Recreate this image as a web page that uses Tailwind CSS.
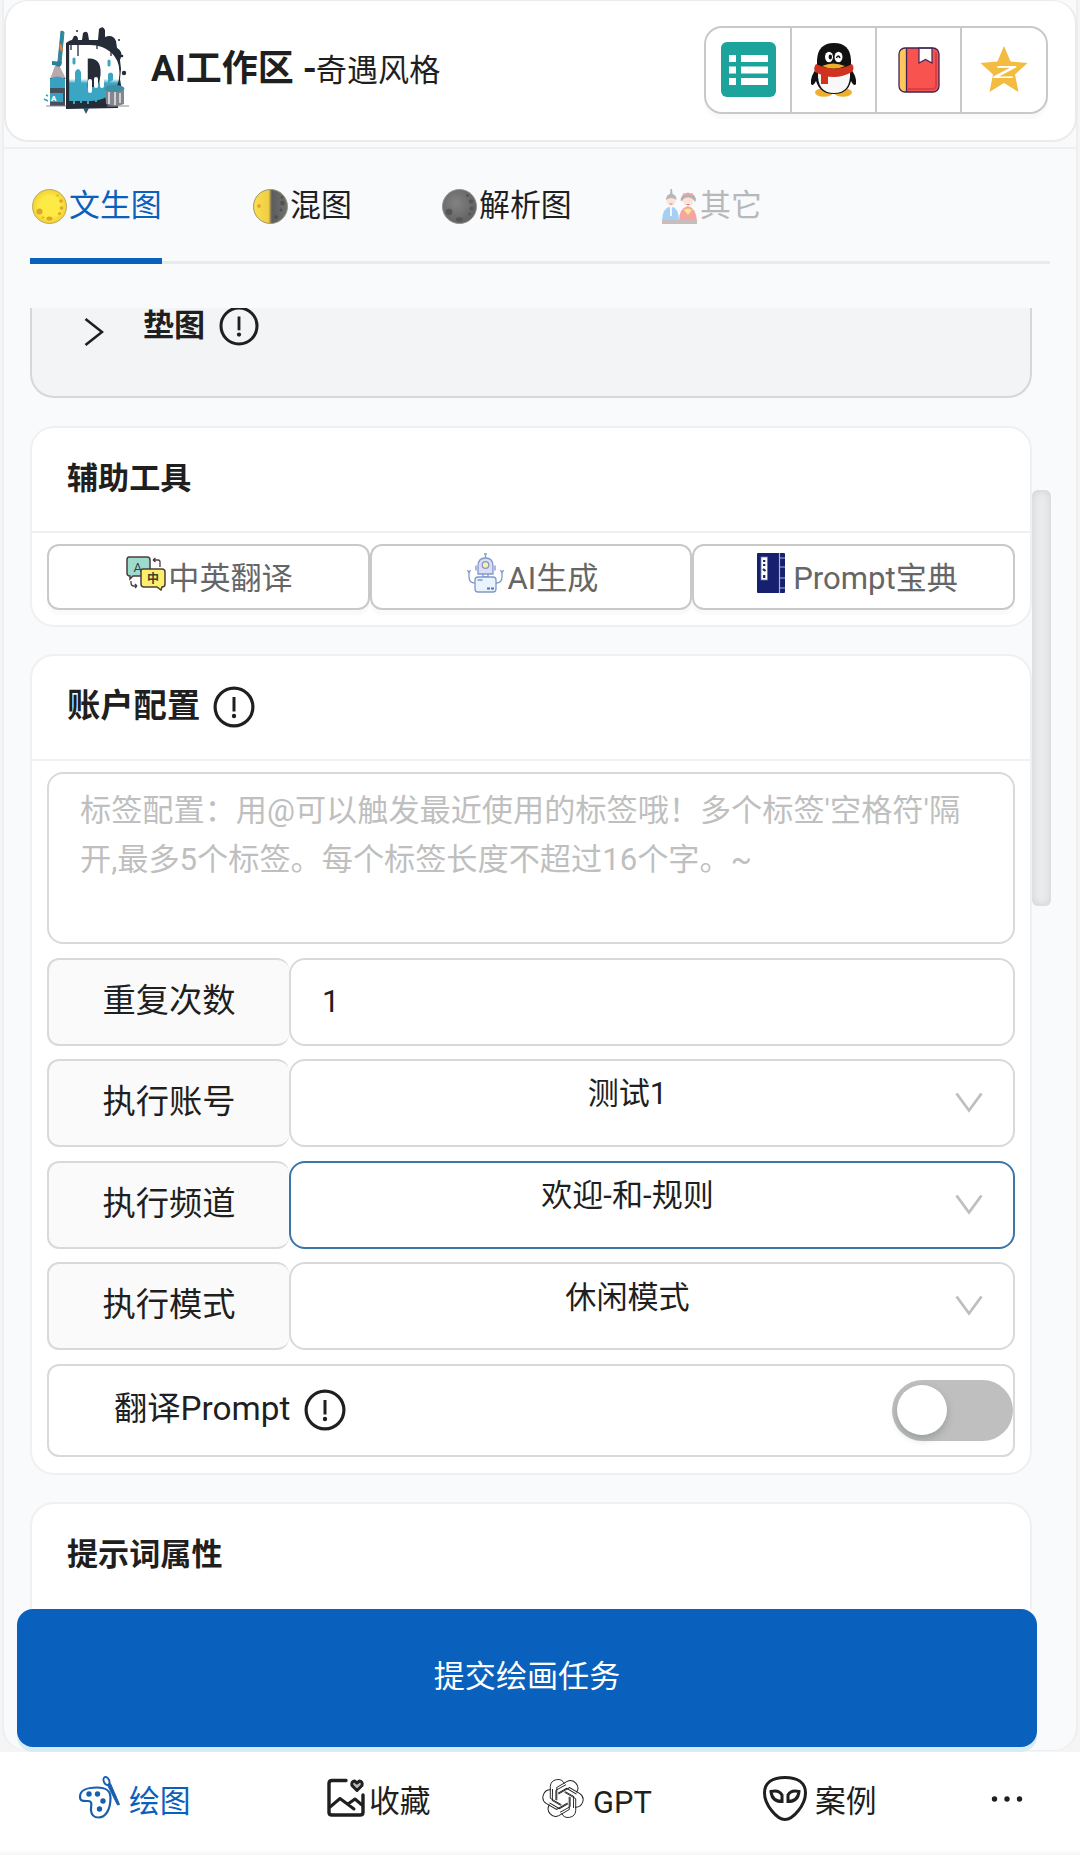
<!DOCTYPE html>
<html lang="zh-CN">
<head>
<meta charset="utf-8">
<title>AI工作区</title>
<script src="https://cdn.jsdelivr.net/npm/@tailwindcss/browser@4"></script>
</head>
<body class="w-[1080px] h-[1855px] overflow-hidden bg-[#f5f5f5] text-[#1f1f1f] font-['Roboto','Noto_Sans_CJK_SC',sans-serif] text-[31.1px] leading-[48px] flex flex-col">

<svg class="hidden">
  <symbol id="info" viewBox="0 0 42 42">
    <circle cx="21" cy="21" r="18.9" fill="none" stroke="#1f1f1f" stroke-width="3.2"/>
    <path d="M21 11v14.5" stroke="#1f1f1f" stroke-width="3"/>
    <circle cx="21" cy="30" r="2.2" fill="#1f1f1f"/>
  </symbol>
  <symbol id="down" viewBox="0 0 28 20">
    <path d="M1.5 .5 14 17.5 26.500 .5" fill="none" stroke="#bfbfbf" stroke-width="2.800"/>
  </symbol>
</svg>

<main class="h-[1751px] mx-[2px] rounded-b-[24px] border-x-2 border-b border-[#eeeff0] bg-[#f9fafc] flex flex-col">

  <header class="h-[142px] shrink-0 -mr-px rounded-[24px] border-2 border-t border-[#ebebeb] bg-white flex items-center pl-[37px] pr-[27px]">
    <svg class="w-[88px] h-[90px] shrink-0" viewBox="42 27 88 90">
      <path d="M65 44q4-3 6-3l2-4q4-1 4 4h4l1-7q4-3 5 1l1 6h9l1-11q4-4 6 1v7q8-3 11 4l1 7q7 4 3 12l1 9-1 10 2 12-4 12v5l-52 1z" fill="#262b38"/>
      <defs><linearGradient id="dfill" x1="0" y1="45" x2="0" y2="101" gradientUnits="userSpaceOnUse"><stop offset=".62" stop-color="#fff"/><stop offset=".7" stop-color="#3ba6c4"/><stop offset="1" stop-color="#3ba6c4"/></linearGradient></defs>
      <text x="66" y="100" font-family="Roboto" font-weight="900" font-size="73" textLength="53" lengthAdjust="spacingAndGlyphs" fill="url(#dfill)" stroke="url(#dfill)" stroke-width="4">D</text>
      <path d="M74 84v-11q3-6 6 0v14M107 84v-9q3-3 5 0v6" fill="#3ba6c4"/>
      <path d="M89 82v10M95 80v7M101 79v8" stroke="#fff" stroke-width="4" stroke-linecap="round"/>
      <path d="M70 45v6M77 45v12M96 45v5M110 50v7" stroke="#262b38" stroke-width="1.300"/>
      <path d="M73 60v4M108 62v4" stroke="#3ba6c4" stroke-width="3" stroke-linecap="round"/>
      <circle cx="123" cy="74" r="2.200" fill="#262b38"/><circle cx="121" cy="57" r="1.300" fill="#262b38"/><circle cx="118" cy="41" r="1" fill="#262b38"/><circle cx="76" cy="32" r="1" fill="#262b38"/>
      <path d="M60 32l3 1-3 31-4 9-3-1 4-10z" fill="#31859c" stroke="#31859c"/>
      <path d="M59 45l2 7" stroke="#e0803b" stroke-width="2.500"/>
      <path d="M51 62l10 1-1 4-9-1z" fill="#2d7e96"/>
      <path d="M54 67l5 1 6 12H49z" fill="#b7a9ac"/>
      <path d="M49 79h15v28H49z" fill="#474f5d"/>
      <path d="M49 80q7-5 15 0v9H49zM49 94h13v9H49z" fill="#36a1c0"/>
      <text x="50" y="102" font-family="Roboto" font-weight="900" font-size="8" fill="#fff">A</text>
      <path d="M45 107h20M106 107h22" stroke="#8a8d94" stroke-width="1"/>
      <path d="M104 90h19v15q-9 4-18 0z" fill="#85868d"/><path d="M108 93v12M114 93v13M119 94v10" stroke="#cfd1d5" stroke-width="2"/>
      <ellipse cx="113.500" cy="89.500" rx="10" ry="3.500" fill="#3e8fa5"/>
      <path d="M73 100v5M80 100v4M87 100v5M95 99v4" stroke="#3ba6c4" stroke-width="2"/>
      <path d="M82 109h6l-3 6z" fill="#33566b"/>
      <path d="M43 100l4 2M45 96l2 1" stroke="#36a1c0" stroke-width="1.500"/>
    </svg>
    <h1 class="ml-[20px] -mt-[1px] whitespace-nowrap"><span class="text-[36px] font-bold">AI工作区 -</span><span class="-ml-px">奇遇风格</span></h1>

    <nav class="ml-auto -mt-[2px] h-[88px] flex rounded-[18px] border-2 border-[#c9c9c9] bg-white shadow-[0_5px_0_rgba(0,0,0,0.02)] divide-x-2 divide-[#c9c9c9]">
      <a class="w-[86px] flex items-center justify-center"><svg class="w-[55px] h-[55px]" viewBox="0 0 55 55"><rect width="55" height="55" rx="6" fill="#1ba39c"/><path d="M8 13h7v7H8zM8 24.500h7v7H8zM8 36h7v7H8zM20 13h27v7H20zM20 24.500h27v7H20zM20 36h27v7H20z" fill="#fff"/></svg></a>
      <a class="w-[85px] flex items-center justify-center"><svg class="w-[48px] h-[56px]" viewBox="0 0 48 56">
        <ellipse cx="14" cy="50.500" rx="9" ry="4.200" fill="#eeb02c"/><ellipse cx="33" cy="50.500" rx="9" ry="4.200" fill="#eeb02c"/>
        <path d="M7 26Q0 34 1 42q2 3 5-3 4 13 18 13t17-13q3 6 5 3 1-8-6-16z" fill="#111"/>
        <path d="M7 27V18Q8 1 24 1t17 17v9q-4 6-17 6T7 27z" fill="#111"/>
        <path d="M8 30Q7 51 24 51t16-21q-16 7-32 0z" fill="#f8f8f8"/>
        <path d="M6 22q-3 4-1 8 19 10 37 0 3-4 0-8-17 9-36 0z" fill="#d0321f"/><path d="M11 31l7 2v9h-7z" fill="#d0321f"/>
        <ellipse cx="19" cy="15" rx="4" ry="5.200" fill="#fff"/><ellipse cx="28.500" cy="15" rx="4" ry="5.200" fill="#fff"/><ellipse cx="20.300" cy="15" rx="1.700" ry="2.400" fill="#111"/><path d="M26.500 16q1.500-4 3.500 0" fill="none" stroke="#111" stroke-width="1.600"/>
        <path d="M12 24q11-5 23 0-11 5-23 0z" fill="#eeb02c"/></svg></a>
      <a class="w-[85px] flex items-center justify-center"><svg class="w-[42px] h-[46px]" viewBox="0 0 42 46"><rect x="1" y="1" width="40" height="44" rx="6" fill="#f9534f"/><path d="M8.500 1H7a6 6 0 0 0-6 6v32a6 6 0 0 0 6 6h1.500z" fill="#ffc65c"/><path d="M38 5v33q0 4-4 4H10" fill="none" stroke="#d93f45" stroke-width="2"/><path d="M21 1v15l6.500-3.500L34 16V1z" fill="#fff" stroke="#412552" stroke-width="1.200"/><path d="M8.500 1v44" stroke="#412552" stroke-width="1.300"/><rect x="1" y="1" width="40" height="44" rx="6" fill="none" stroke="#412552" stroke-width="1.300"/></svg></a>
      <a class="w-[84px] flex items-center justify-center"><svg class="w-[48px] h-[47px]" viewBox="0 0 48 47"><path d="M24 0l6.500 15.500L47.500 17 35 28.500 38.500 46 24 37 9.500 46 13 28.500.5 17l17-1.500z" fill="#f3bb3f"/><text x="13.500" y="32" font-family="Roboto" font-style="italic" font-weight="500" font-size="17" textLength="22" lengthAdjust="spacingAndGlyphs" fill="#fff">Z</text></svg></a>
    </nav>
  </header>

  <div class="mt-[5px] h-[2px] shrink-0 bg-[#eeeff0]"></div>

  <div class="h-[115px] shrink-0 ml-[26px] mr-[26px] border-b-[3px] border-[#e8eaec] flex gap-[89px] text-[30.9px]">
    <a class="-mb-[3px] h-[115px] w-[132px] border-b-[6px] border-[#0a60bd] text-[#0a60bd] flex pt-[33px] gap-[2px] pl-[2px] whitespace-nowrap">
      <svg class="w-[35px] h-[35px] mt-[7px] shrink-0" viewBox="0 0 35 35"><defs><radialGradient id="m1"><stop offset=".6" stop-color="#fdea45"/><stop offset="1" stop-color="#f3d035"/></radialGradient></defs><circle cx="17.500" cy="17.500" r="17" fill="url(#m1)" stroke="#b8ac62" stroke-width="1"/><g fill="#dba52a"><circle cx="7.500" cy="22.500" r="3"/><ellipse cx="17.500" cy="29.500" rx="3" ry="2"/><circle cx="29" cy="12" r="1.800"/><circle cx="25.500" cy="6.500" r="1"/><circle cx="29.500" cy="19" r="1.800"/><circle cx="27.500" cy="24.500" r="1.500"/><circle cx="11" cy="28.500" r="1"/></g></svg>
      <span>文生图</span></a>
    <a class="w-[100px] flex pt-[33px] gap-[2px] pl-[2px] whitespace-nowrap">
      <svg class="w-[35px] h-[35px] mt-[7px] shrink-0" viewBox="0 0 35 35"><defs><linearGradient id="m2"><stop offset="0" stop-color="#fbe04b"/><stop offset=".44" stop-color="#f0cd44"/><stop offset=".54" stop-color="#5d5d5d"/><stop offset="1" stop-color="#707070"/></linearGradient></defs><circle cx="17.500" cy="17.500" r="17" fill="url(#m2)" stroke="#9b9678" stroke-width="1"/><circle cx="6" cy="17" r="2" fill="#e2a832"/><g fill="#505050"><circle cx="29.500" cy="14" r="2.300"/><circle cx="29" cy="8.500" r="1.300"/><circle cx="28" cy="21" r="1.500"/><circle cx="23" cy="28" r="2"/></g></svg>
      <span>混图</span></a>
    <a class="w-[131px] flex pt-[33px] gap-[2px] pl-[2px] whitespace-nowrap">
      <svg class="w-[35px] h-[35px] mt-[7px] shrink-0" viewBox="0 0 35 35"><defs><radialGradient id="m3" cx=".4" cy=".4" r=".65"><stop offset="0" stop-color="#828282"/><stop offset="1" stop-color="#606060"/></radialGradient></defs><circle cx="17.500" cy="17.500" r="17" fill="url(#m3)" stroke="#909090" stroke-width="1"/><g fill="#555"><circle cx="7" cy="23" r="3.300"/><ellipse cx="17.500" cy="30.500" rx="3.500" ry="2.200"/><circle cx="29" cy="12.500" r="2.200"/><circle cx="25.500" cy="6.500" r="1.500"/><circle cx="29.500" cy="19.500" r="2"/><circle cx="27.500" cy="25" r="1.600"/></g></svg>
      <span>解析图</span></a>
    <a class="flex pt-[33px] gap-[3px] pl-[2px] whitespace-nowrap text-[#b7b8ba]">
      <svg class="w-[35px] h-[35px] mt-[7px] shrink-0" viewBox="0 0 35 35"><path d="M0 32Q0 19 9 17q8 2 8 15z" fill="#a5cff5"/><path d="M17 32q0-13 9-15 8 2 9 15z" fill="#f5a5a2"/><path d="M7 17h4l-2 5zM8 20h2v7H8z" fill="#f4f7fa"/><ellipse cx="9" cy="11.500" rx="4.700" ry="5" fill="#fae3d8"/><path d="M4 11q0-5 4-6l.5-5h1.500l.5 5q4 1 4 6-5-4-10.500 0z" fill="#b5b7b9"/><ellipse cx="26" cy="12" rx="5" ry="5" fill="#fae3d8"/><path d="M18.500 11q1-6 5-6 2-3 5 0 5 0 5.500 6l-1 2q-3-5-7-4.500-4-.5-6 4z" fill="#bbb0b0"/><path d="M21 5h10" stroke="#f3a5a5" stroke-width="1.500"/><path d="M7.500 15h3M24.500 15.500h3" stroke="#f0716c" stroke-width="1"/><path d="M22 21q4-3 8 0l-4 5z" fill="#f9e98c"/><path d="M0 31h35v4H0z" fill="#c8bdba"/></svg>
      <span>其它</span></a>
  </div>

  <div class="mt-[44px] ml-[26px] mr-[25px] h-[1301px] shrink-0 overflow-hidden flex">
    <div class="w-[1002px] shrink-0 flex flex-col">

      <section class="h-[90px] shrink-0 rounded-b-[24px] border-2 border-t-0 border-[#d6d7d9] bg-[#f3f4f6] flex items-start pl-[52px] font-bold">
        <svg class="w-[20px] h-[28px] mt-[10px]" viewBox="0 0 20 28"><path d="M1.500 1 18 14 1.500 27" fill="none" stroke="#1f1f1f" stroke-width="2.600"/></svg>
        <span class="ml-[39px] -mt-[6px]">垫图</span>
        <svg class="w-[40px] h-[40px] ml-[14px] -mt-[2px]"><use href="#info"/></svg>
      </section>

      <section class="mt-[28px] h-[201px] shrink-0 rounded-[24px] border-2 border-[#f0f0f0] bg-white">
        <h2 class="h-[105px] border-b-2 border-[#f0f0f0] px-[35px] pt-[27px] font-bold">辅助工具</h2>
        <div class="px-[15px] pt-[11px] flex text-[#666]">
          <button class="w-[323px] h-[66px] rounded-[12px] border-2 border-[#c9c9c9] shadow-[0_5px_0_rgba(0,0,0,0.02)] flex items-center justify-center gap-[2px] pl-[2px] whitespace-nowrap">
            <svg class="w-[40px] h-[35px] -mt-[8px]" viewBox="0 0 40 35"><path d="M3 1h18q3 0 3 3v14q0 2-2 2H7l-3 3v-3q-3 0-3-3V4q0-3 2-3z" fill="#9ddccd" stroke="#4b3d40" stroke-width="1.500"/><text x="7.500" y="15.500" font-size="13" font-family="Roboto" fill="#3f3f44">A</text><path d="M27 4h5q2 0 2 2v5M27 4l2.500-2M27 4l2.500 2M5 25v2q0 3 3 3h3M11 30l-2-2M11 30l-2 2" fill="none" stroke="#4b3d40" stroke-width="1.300"/><path d="M17 13h19q3 0 3 3v12q0 3-3 3l-1 3-4-3H18q-3 0-3-3V15q0-2 2-2z" fill="#fcf06a" stroke="#4b3d40" stroke-width="1.500"/><text x="21" y="26.500" font-size="12" font-weight="700" font-family="Noto Sans CJK SC" fill="#3f3f30">中</text></svg>
            <span class="pt-[3px]">中英翻译</span></button>
          <button class="w-[322px] h-[66px] rounded-[12px] border-2 border-[#c9c9c9] shadow-[0_5px_0_rgba(0,0,0,0.02)] flex items-center justify-center gap-[4px] pl-[3px] whitespace-nowrap">
            <svg class="w-[37px] h-[40px] -mt-[9px]" viewBox="0 0 37 40" fill="none" stroke="#7f99c9" stroke-width="1.300"><path d="M18.500 5V2M17 1h3"/><path d="M11 21v-8q0-8 7.500-8t7.500 8v8z" fill="#dfdcf7"/><circle cx="18.500" cy="12" r="3.300" fill="#f7f1a0"/><path d="M9 12.500v5M28 12.500v5M16 21v3h5v-3"/><rect x="8" y="24" width="21" height="15" rx="3" fill="#e8f3fe"/><path d="M8 30q-6 0-6-6v-4M.5 17l1.500 3 1.500-3M29 30q6 0 6-6v-4M33.500 17l1.500 3 1.500-3M10.500 27h5"/><path d="M20 35.500h3M24 35.500h3" stroke="#5d6fc0" stroke-width="2"/></svg>
            <span class="pt-[3px]">AI生成</span></button>
          <button class="w-[323px] h-[66px] rounded-[12px] border-2 border-[#c9c9c9] shadow-[0_5px_0_rgba(0,0,0,0.02)] flex items-center justify-center gap-[8px] pl-[8px] whitespace-nowrap">
            <svg class="w-[28px] h-[40px] -mt-[8px]" viewBox="0 0 28 40"><rect width="28" height="40" rx="1" fill="#15206f"/><path d="M22.500 0v40M22.500 5H28M22.500 14H28M22.500 25H28M22.500 35H28" stroke="#aab0d8" stroke-width="1.200"/><rect x="4" y="4" width="6.500" height="23" fill="#fff" stroke="#6c74b0" stroke-width=".8"/><path d="M7.200 7v2M7.200 11v2M6 16l2.500 2M7.200 22v3" stroke="#15206f" stroke-width="2.200"/></svg>
            <span class="pt-[3px]">Prompt宝典</span></button>
        </div>
      </section>

      <section class="mt-[27px] h-[821px] shrink-0 rounded-[24px] border-2 border-[#f0f0f0] bg-white text-[33.3px]">
        <h2 class="h-[105px] border-b-2 border-[#f0f0f0] px-[35px] pt-[26px] font-bold flex items-start"><span>账户配置</span><svg class="w-[42px] h-[42px] ml-[13px] mt-[4px]"><use href="#info"/></svg></h2>
        <div class="px-[15px] pt-[11px] flex flex-col gap-[13.6px]">
          <div class="h-[172px] rounded-[16px] border-2 border-[#d9d9d9] px-[31px] pt-[12px] text-[31.17px] leading-[49px] text-[#bfbfbf] whitespace-nowrap">标签配置：用@可以触发最近使用的标签哦！多个标签'空格符'隔<br>开,最多5个标签。每个标签长度不超过16个字。~</div>
          <div class="h-[88px] flex">
            <label class="w-[242px] rounded-[12px] border-2 border-r-0 border-[#d9d9d9] bg-[#fafafa] flex items-center justify-center pb-[2px]">重复次数</label>
            <div class="flex-1 rounded-[16px] border-2 border-[#d9d9d9] bg-white flex items-center pl-[31px] text-[31.1px]">1</div>
          </div>
          <div class="h-[88px] flex">
            <label class="w-[242px] rounded-[12px] border-2 border-r-0 border-[#d9d9d9] bg-[#fafafa] flex items-center justify-center pb-[2px]">执行账号</label>
            <div class="flex-1 rounded-[16px] border-2 border-[#d9d9d9] bg-white flex items-center pr-[30px] text-[31.1px]"><span class="flex-1 pl-[9px] pb-[18px] text-center">测试1</span><svg class="w-[28px] h-[20px]"><use href="#down"/></svg></div>
          </div>
          <div class="h-[88px] flex">
            <label class="w-[242px] rounded-[12px] border-2 border-r-0 border-[#d9d9d9] bg-[#fafafa] flex items-center justify-center pb-[2px]">执行频道</label>
            <div class="flex-1 rounded-[16px] border-2 border-[#3c76a8] bg-white flex items-center pr-[30px] text-[31.1px]"><span class="flex-1 pl-[9px] pb-[17px] text-center">欢迎-和-规则</span><svg class="w-[28px] h-[20px]"><use href="#down"/></svg></div>
          </div>
          <div class="h-[88px] flex">
            <label class="w-[242px] rounded-[12px] border-2 border-r-0 border-[#d9d9d9] bg-[#fafafa] flex items-center justify-center pb-[2px]">执行模式</label>
            <div class="flex-1 rounded-[16px] border-2 border-[#d9d9d9] bg-white flex items-center pr-[30px] text-[31.1px]"><span class="flex-1 pl-[9px] pb-[17px] text-center">休闲模式</span><svg class="w-[28px] h-[20px]"><use href="#down"/></svg></div>
          </div>
          <div class="h-[93px] rounded-[12px] border-2 border-[#d9d9d9] flex items-center pl-[65px]">
            <span class="pb-[3px]">翻译Prompt</span><svg class="w-[42px] h-[42px] ml-[14px]"><use href="#info"/></svg>
            <span class="ml-auto w-[121px] h-[61px] rounded-full bg-[#bfbfbf] flex items-center pl-[5px]"><i class="w-[50px] h-[50px] rounded-full bg-white shadow-[0_4px_9px_rgba(0,35,11,0.2)]"></i></span>
          </div>
        </div>
      </section>

      <section class="mt-[27px] h-[200px] shrink-0 rounded-[24px] border-2 border-[#f0f0f0] bg-white">
        <h2 class="px-[35px] pt-[27px] font-bold">提示词属性</h2>
      </section>
    </div>
    <div class="w-[19px] h-[416px] mt-[182px] rounded-[6px] bg-[#eaebed] shadow-[inset_0_0_8px_rgba(0,0,0,0.12)]"></div>
  </div>

  <button class="ml-[13px] w-[1020px] h-[138px] shrink-0 rounded-[16px] bg-[#0a60bd] shadow-[0_5px_0_#d8ebf5] text-white pb-[2px]">提交绘画任务</button>
</main>

<footer class="mt-px h-[103px] bg-white shadow-[inset_0_-4px_4px_-2px_#f3f3f3] flex text-[30.8px]">
  <a class="w-[248px] pl-[78px] pt-[24px] flex gap-[9px] text-[#0a60bd] whitespace-nowrap">
    <svg class="w-[42px] h-[43px]" viewBox="0 0 42 43"><path d="M32.500 22C32.500 13 26 11.500 19 11.500 8 11.500 2 15 2 20.500c0 5 3 4.500 8 4.500 5.500 0 2.500 5 3 9.500 .5 5 4 7 7.500 7 7 0 12-8 12-19.500z" fill="none" stroke="#175fae" stroke-width="2.200"/><g fill="#175fae"><circle cx="11" cy="18" r="2.700"/><circle cx="19.500" cy="18" r="2.700"/><circle cx="25" cy="25" r="2.700"/><circle cx="21.500" cy="33" r="2.700"/><path d="M29.500 9l3-1.500 9 21-2 .5z" stroke="#175fae"/></g><ellipse cx="28.500" cy="5" rx="2.700" ry="4.200" transform="rotate(-24 28.500 5)" fill="none" stroke="#175fae" stroke-width="2"/></svg>
    <span class="pt-[2px]">绘图</span></a>
  <a class="w-[219px] pl-[78px] pt-[26px] flex gap-[3px] whitespace-nowrap">
    <svg class="w-[40px] h-[40px]" viewBox="0 0 40 40" fill="none" stroke="#1f1f1f" stroke-width="3.400" stroke-linejoin="round" stroke-linecap="round"><path d="M20 2.500H6Q3 2.500 3 5.500v29q0 2.500 3 2.500h28q3 0 3-2.500V17"/><path d="M4 29l10-8.500L28 31M22 26l7-5 7 6" stroke-width="3"/><path d="M31 12.500l-5-5q-1-4 2.500-4.500l2.500 2 2.500-2Q37 3.500 36 7.500z" fill="#bbb" stroke-width="3"/></svg>
    <span>收藏</span></a>
  <a class="w-[219px] pl-[75px] pt-[25px] flex gap-[9px] whitespace-nowrap">
    <svg class="w-[42px] h-[43px]" viewBox="1 0.500 22 23" fill="none" stroke="#1f1f1f" stroke-width=".5"><defs><path id="lobe" d="M12.783 4.100a4 4 0 0 0-7.583 1.400v6.400l6 3.450M13.600 4.600 8.200 7.600v5.200"/></defs><use href="#lobe"/><use href="#lobe" transform="rotate(60 12 12)"/><use href="#lobe" transform="rotate(120 12 12)"/><use href="#lobe" transform="rotate(180 12 12)"/><use href="#lobe" transform="rotate(240 12 12)"/><use href="#lobe" transform="rotate(300 12 12)"/></svg>
    <span class="pt-[2px]">GPT</span></a>
  <a class="w-[230px] pl-[77px] pt-[24px] flex gap-[8px] whitespace-nowrap">
    <svg class="w-[44px] h-[45px]" viewBox="0 0 44 45" fill="none" stroke="#1f1f1f" stroke-width="3"><path d="M22 1.500C9 1.500 1.500 7 1.500 17 1.500 29 14 43.500 22 43.500S42.500 29 42.500 17C42.500 7 35 1.500 22 1.500z"/><path d="M8 15.500q8-2 11 3.500v6.500q-10 0-11-10zM36 15.500q-8-2-11 3.500v6.500q10 0 11-10z"/></svg>
    <span class="pt-[2px]">案例</span></a>
  <a class="pl-[75px] pt-[43px]"><svg class="w-[32px] h-[8px]" viewBox="0 0 32 8" fill="#1f1f1f"><circle cx="3.500" cy="4" r="2.700"/><circle cx="16" cy="4" r="2.700"/><circle cx="28.500" cy="4" r="2.700"/></svg></a>
</footer>
</body>
</html>
